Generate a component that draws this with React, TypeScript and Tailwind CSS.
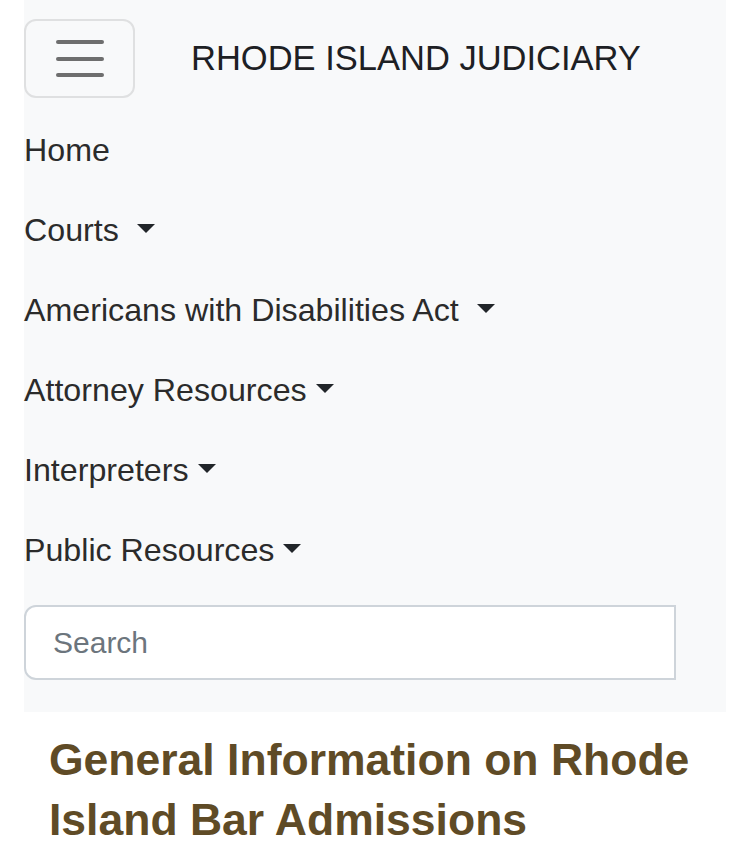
import React from "react";

const items: { label: string; caret: boolean; space?: boolean }[] = [
  { label: "Home", caret: false },
  { label: "Courts", caret: true, space: true },
  { label: "Americans with Disabilities Act", caret: true, space: true },
  { label: "Attorney Resources", caret: true },
  { label: "Interpreters", caret: true },
  { label: "Public Resources", caret: true },
];

function Caret() {
  return (
    <span className="ml-[9px] inline-block h-0 w-0 border-x-[9.6px] border-t-[9.6px] border-x-transparent border-t-[#212529] align-[8px]" />
  );
}

export default function App() {
  return (
    <div className="min-h-[862px] bg-white" style={{ fontFamily: '"Liberation Sans", Arial, sans-serif' }}>
      <div className="ml-[24px] w-[702px] bg-[#f8f9fa] pb-[32px] pt-[19px]">
        <div className="flex items-center">
          <button className="flex h-[79px] w-[111px] flex-col items-center justify-center gap-[12.5px] rounded-[12px] border-2 border-[#dfe0e1]">
            <span className="block h-[4px] w-[48px] rounded-full bg-[#6e6e6e]" />
            <span className="block h-[4px] w-[48px] rounded-full bg-[#6e6e6e]" />
            <span className="block h-[4px] w-[48px] rounded-full bg-[#6e6e6e]" />
          </button>
          <div className="ml-[56px] text-[34.5px] leading-none text-[#1d2024]">RHODE ISLAND JUDICIARY</div>
        </div>
        <ul className="mt-[12px]">
          {items.map((it) => (
            <li key={it.label} className="flex h-[80px] items-center">
              <span className="whitespace-pre text-[32.2px] leading-[48px] text-[#2b2b2b]">
                {it.label}
                {it.space ? " " : ""}
                {it.caret ? <Caret /> : null}
              </span>
            </li>
          ))}
        </ul>
        <div className="mt-[15px] w-[652px]">
          <input
            placeholder="Search"
            className="h-[75px] w-full rounded-l-[12px] border-2 border-[#ced4da] bg-white pl-[27px] text-[30px] text-[#212529] outline-none placeholder:text-[#6c757d]"
          />
        </div>
      </div>
      <h1 className="ml-[49px] mt-[18px] w-[680px] text-[44.5px] font-bold leading-[60px] text-[#5f4b26]">
        General Information on Rhode Island Bar Admissions
      </h1>
    </div>
  );
}
